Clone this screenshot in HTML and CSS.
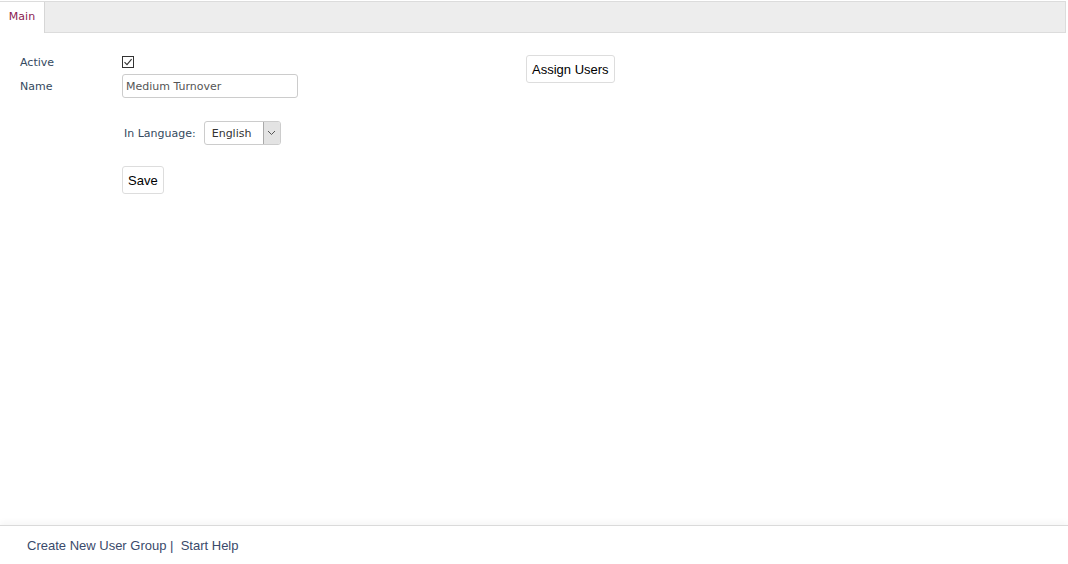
FILE: index.html
```html
<!DOCTYPE html>
<html lang="en">
<head>
    <meta charset="UTF-8">
    <title>User Group</title>
    <link rel="stylesheet" href="styles.css">
</head>
<body>
    <div class="tabs">
        <div class="tab active">Main</div>
    </div>

    <div class="content">
        <form class="group-form">
            <div class="row">
                <label class="lbl">Active</label>
                <span class="check">
                    <svg width="12" height="12" viewBox="0 0 12 12"><rect x="0.5" y="0.5" width="11" height="11" fill="#fff" stroke="#333"/><path d="M2.5 6.2 L5 8.6 L9.6 3.2" fill="none" stroke="#333" stroke-width="1.1"/></svg>
                </span>
            </div>
            <div class="row">
                <label class="lbl">Name</label>
                <input type="text" class="txt" value="Medium Turnover">
            </div>
            <div class="lang">
                <span>In Language:</span>
                <div class="select">
                    <span class="sel-val">English</span>
                    <span class="sel-arrow">
                        <svg width="9" height="6" viewBox="0 0 9 6"><path d="M1 1 L4.5 4.5 L8 1" fill="none" stroke="#555" stroke-width="1"/></svg>
                    </span>
                </div>
            </div>
            <button type="button" class="btn save">Save</button>
        </form>
        <div class="side">
            <button type="button" class="btn">Assign Users</button>
        </div>
    </div>

    <div class="footer">
        <a href="#">Create New User Group</a> |&nbsp;&nbsp;<a href="#">Start Help</a>
    </div>
</body>
</html>
```

FILE: styles.css
```css
body {
    margin: 0;
    padding: 0;
    background: #fff;
    font-family: "DejaVu Sans", Verdana, sans-serif;
    font-size: 11px;
    color: #34495e;
    height: 564px;
    position: relative;
    overflow: hidden;
}
.tabs {
    margin-top: 1px;
    width: 1066px;
    height: 32px;
    box-sizing: border-box;
    background: #ededed;
    border-top: 1px solid #dcdcdc;
    border-bottom: 1px solid #dcdcdc;
    border-right: 1px solid #dcdcdc;
    display: flex;
}
.tab {
    width: 44px;
    background: #fff;
    border-right: 1px solid #d6d6d6;
    color: #8b2252;
    font-size: 11px;
    padding-top: 8px;
    text-align: center;
    margin-bottom: -1px;
}
.content {
    display: flex;
    padding: 23px 0 0 20px;
}
.group-form {
    width: 506px;
}
.row {
    display: flex;
    align-items: center;
}
.row + .row {
    margin-top: 5px;
}
.lbl {
    width: 102px;
}
.check {
    display: flex;
    height: 13px;
}
.txt {
    width: 176px;
    height: 24px;
    box-sizing: border-box;
    border: 1px solid #ccc;
    border-radius: 3px;
    padding: 0 4px 0 3px;
    font-family: "DejaVu Sans", Verdana, sans-serif;
    font-size: 11px;
    color: #555;
}
.lang {
    display: flex;
    align-items: center;
    margin: 23px 0 0 104px;
}
.select {
    display: flex;
    margin-left: 8px;
    width: 77px;
    height: 24px;
    box-sizing: border-box;
    border: 1px solid #ccc;
    border-radius: 3px;
    color: #333;
}
.sel-val {
    flex: 1;
    padding: 5px 0 0 7px;
}
.sel-arrow {
    width: 16px;
    background: #e3e3e3;
    border-left: 1px solid #aaa;
    border-radius: 0 2px 2px 0;
    display: flex;
    align-items: center;
    justify-content: center;
}
.btn {
    font-family: Arial, "Liberation Sans", sans-serif;
    font-size: 13px;
    color: #000;
    background: #fff;
    border: 1px solid #ddd;
    border-radius: 3px;
    padding: 0 5px;
    height: 28px;
}
.save {
    margin: 21px 0 0 102px;
}
.side {
    margin-top: -1px;
}
.footer {
    position: absolute;
    left: 0;
    right: 0;
    top: 525px;
    bottom: 0;
    border-top: 1px solid #dadada;
    box-shadow: 0 -3px 6px rgba(0,0,0,0.04);
    padding: 12px 0 0 27px;
    font-family: Arial, "Liberation Sans", sans-serif;
    font-size: 13px;
    color: #3a4a6b;
}
.footer a {
    color: #3a4a6b;
    text-decoration: none;
}
```
